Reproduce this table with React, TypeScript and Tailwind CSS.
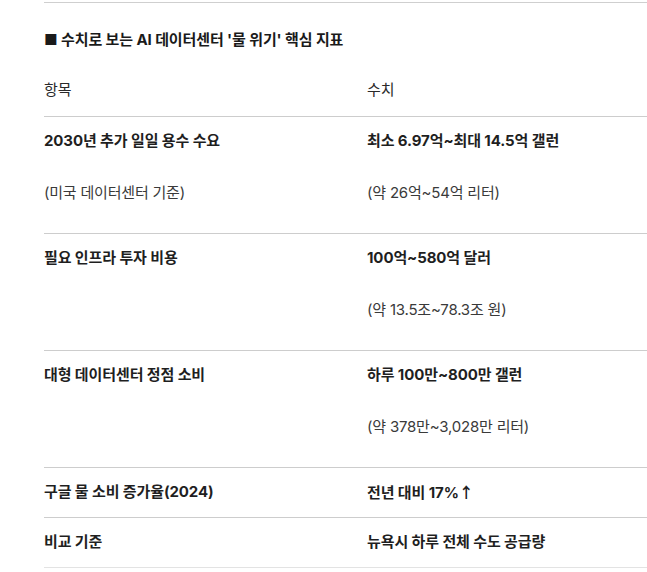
import React from "react";

type Row = { left: React.ReactNode[]; right: React.ReactNode[]; h: string };

const rows: Row[] = [
  { left: ["2030년 추가 일일 용수 수요", "(미국 데이터센터 기준)"], right: ["최소 6.97억~최대 14.5억 갤런", "(약 26억~54억 리터)"], h: "h-[117px]" },
  { left: ["필요 인프라 투자 비용"], right: ["100억~580억 달러", "(약 13.5조~78.3조 원)"], h: "h-[117px]" },
  { left: ["대형 데이터센터 정점 소비"], right: ["하루 100만~800만 갤런", "(약 378만~3,028만 리터)"], h: "h-[117px]" },
  {
    left: ["구글 물 소비 증가율(2024)"],
    right: [
      <>
        전년 대비 17%
        <span className="font-['Noto_Sans_CJK_KR',sans-serif] font-bold">↑</span>
      </>,
    ],
    h: "h-[50px]",
  },
  { left: ["비교 기준"], right: ["뉴욕시 하루 전체 수도 공급량"], h: "h-[50px]" },
];

function Cell({ lines }: { lines: React.ReactNode[] }) {
  return (
    <div className="flex flex-col gap-[28px] pt-3">
      {lines.map((l, i) => (
        <div
          key={i}
          className={
            i === 0
              ? "text-[15px] leading-[24px] font-bold text-[#1f1f1f] tracking-[-0.1px]"
              : "text-[15px] leading-[24px] font-normal text-[#3a3a3a] tracking-[-0.2px]"
          }
        >
          {l}
        </div>
      ))}
    </div>
  );
}

export default function App() {
  return (
    <div className="w-[647px] h-[572px] bg-white overflow-hidden font-['Inter','Noto_Sans_CJK_KR',sans-serif]">
      <div className="pl-[44px]">
        <div className="mt-[2px] h-px bg-[#cfcfcf]" />
        <div className="mt-[25px] text-[15px] leading-[24px] font-bold text-[#1a1a1a] tracking-[-0.1px]">
          ■ 수치로 보는 AI 데이터센터 '물 위기' 핵심 지표
        </div>
        <div className="mt-[26px] flex h-[38px] text-[15px] leading-[24px] text-[#2a2a2a]">
          <div className="w-[323px]">항목</div>
          <div>수치</div>
        </div>
        {rows.map((r, i) => (
          <div key={i} className={`flex border-t border-[#cdcdcd] ${r.h}`}>
            <div className="w-[323px]">
              <Cell lines={r.left} />
            </div>
            <div className="flex-1">
              <Cell lines={r.right} />
            </div>
          </div>
        ))}
        <div className="h-px bg-[#e3e3e3]" />
      </div>
    </div>
  );
}
